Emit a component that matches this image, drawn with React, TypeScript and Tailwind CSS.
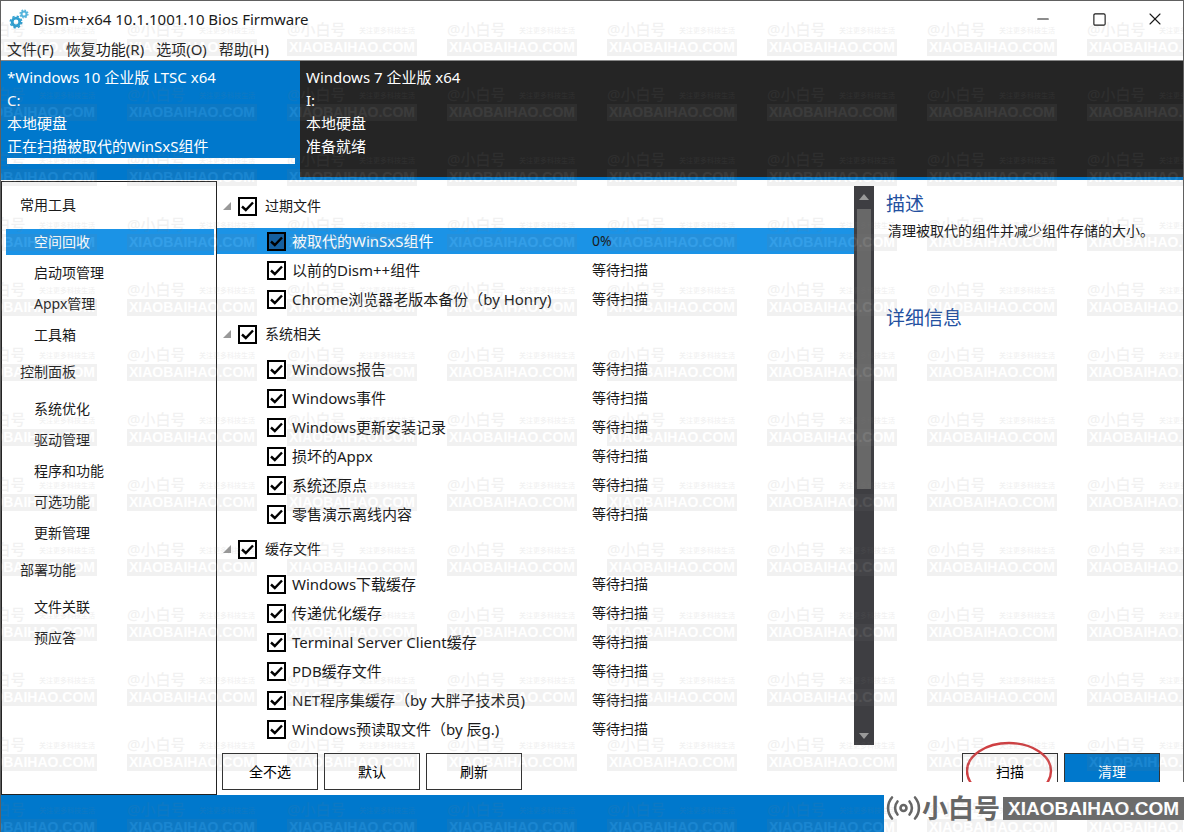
import { Minus, Square, X } from 'lucide-react'

const menus = ['文件(F)', '恢复功能(R)', '选项(O)', '帮助(H)']

const tools = [
  { title: '常用工具', items: ['空间回收', '启动项管理', 'Appx管理', '工具箱'] },
  { title: '控制面板', items: ['系统优化', '驱动管理', '程序和功能', '可选功能', '更新管理'] },
  { title: '部署功能', items: ['文件关联', '预应答'] },
]

const groups = [
  {
    title: '过期文件',
    items: ['被取代的WinSxS组件', '以前的Dism++组件', 'Chrome浏览器老版本备份（by Honry)'],
  },
  {
    title: '系统相关',
    items: ['Windows报告', 'Windows事件', 'Windows更新安装记录', '损坏的Appx', '系统还原点', '零售演示离线内容'],
  },
  {
    title: '缓存文件',
    items: [
      'Windows下载缓存',
      '传递优化缓存',
      'Terminal Server Client缓存',
      'PDB缓存文件',
      'NET程序集缓存（by 大胖子技术员)',
      'Windows预读取文件（by 辰g.)',
    ],
  },
]

const ACTIVE_TOOL = '空间回收'
const ACTIVE_ITEM = '被取代的WinSxS组件'

function Gears() {
  return (
    <svg viewBox="0 0 20 20" className="size-5" fill="none" aria-hidden="true">
      <circle cx="7" cy="13" r="3.8" stroke="#2f9fd0" strokeWidth="2.8" />
      <circle cx="7" cy="13" r="5.7" stroke="#2f9fd0" strokeWidth="1.6" strokeDasharray="2.3 2.18" />
      <circle cx="15" cy="5" r="2.5" stroke="#55b4dc" strokeWidth="2" />
      <circle cx="15" cy="5" r="3.9" stroke="#55b4dc" strokeWidth="1.3" strokeDasharray="1.6 1.46" />
    </svg>
  )
}

function CheckBox({ active = false }: { active?: boolean }) {
  return (
    <span className="grid size-[19px] shrink-0 place-items-center">
      <input
        type="checkbox"
        defaultChecked
        className={`peer col-start-1 row-start-1 size-[19px] appearance-none border-2 border-black ${
          active ? 'bg-[#155f9f]' : 'bg-white'
        }`}
      />
      <svg
        viewBox="0 0 13 13"
        className="pointer-events-none col-start-1 row-start-1 hidden size-[13px] peer-checked:block"
        fill="none"
        stroke="#000"
        strokeWidth="2.4"
        aria-hidden="true"
      >
        <path d="M1 6.5 4.8 10 12 2.5" />
      </svg>
    </span>
  )
}

function ActionButton({ label, primary = false }: { label: string; primary?: boolean }) {
  return (
    <button
      className={`h-[37px] w-24 border border-[#333] ${primary ? 'bg-[#0078cc] text-white' : 'bg-white text-black'}`}
    >
      {label}
    </button>
  )
}

function Watermark() {
  return (
    <div
      aria-hidden="true"
      className="pointer-events-none absolute inset-0 overflow-hidden pt-[17px] opacity-10 select-none"
    >
      {Array.from({ length: 13 }, (_, row) => (
        <div key={row} className="-ml-[34px] flex h-[65px]">
          {Array.from({ length: 8 }, (_, col) => (
            <div key={col} className="w-40 shrink-0 text-[#808080]">
              <div className="flex h-[21px] w-[130px] items-center justify-between pr-0.5 font-medium whitespace-nowrap">
                <span className="text-[15px] leading-5">@小白号</span>
                <span className="pt-1 text-[7px] leading-4">关注更多科技生活</span>
              </div>
              <div className="h-[17px] w-[130px] bg-[#808080] text-center font-['Liberation_Sans',sans-serif] text-[14px] leading-[17px] font-bold text-white">
                XIAOBAIHAO.COM
              </div>
            </div>
          ))}
        </div>
      ))}
    </div>
  )
}

function Brand() {
  return (
    <div className="absolute -right-px bottom-0 flex h-[50px] w-[300px] items-start bg-white pt-[13px] text-[#666]">
      <svg viewBox="0 0 36 26" className="ml-0.5 h-[26px] w-9" fill="none" stroke="currentColor" strokeWidth="2.6" strokeLinecap="round" aria-hidden="true">
        <circle cx="17.5" cy="13" r="3" strokeWidth="2.6" />
        <path d="M11.5 6.5a10 10 0 0 0 0 13M23.5 6.5a10 10 0 0 1 0 13" />
        <path d="M6 2.5a16 16 0 0 0 0 21M29 2.5a16 16 0 0 1 0 21" />
      </svg>
      <span className="flex-1 text-[26px] leading-[26px] font-bold whitespace-nowrap">小白号</span>
      <span className="mt-0.5 h-[23px] w-[181px] bg-[#6b6b6b] text-center font-['Liberation_Sans',sans-serif] text-[19px] leading-[23px] font-bold text-white">
        XIAOBAIHAO.COM
      </span>
    </div>
  )
}

export default function App() {
  return (
    <div className="relative flex min-h-screen flex-col border-x border-t border-[#606060] bg-white font-['Noto_Sans','Noto_Sans_CJK_SC',sans-serif] text-[14px] leading-5 text-[#1a1a1a]">
      {/* Title bar */}
      <header className="flex h-9 items-center">
        <div className="flex flex-1 items-center gap-1 pl-2">
          <Gears />
          <h1 className="text-[15px]">Dism++x64 10.1.1001.10 Bios Firmware</h1>
        </div>
        <button aria-label="最小化" className="flex h-full w-14 items-center justify-center">
          <Minus size={18} strokeWidth={1.6} />
        </button>
        <button aria-label="最大化" className="flex h-full w-14 items-center justify-center">
          <Square size={15} strokeWidth={1.8} strokeLinejoin="miter" />
        </button>
        <button aria-label="关闭" className="flex h-full w-14 items-center justify-center">
          <X size={20} strokeWidth={1.3} />
        </button>
      </header>

      <nav className="flex h-[23px] items-center gap-3 pl-1.5 text-[15px]">
        {menus.map((menu) => (
          <button key={menu}>{menu}</button>
        ))}
      </nav>

      {/* Installed systems */}
      <section className="flex h-[120px] border-t border-b-[3px] border-t-[#888] border-b-[#0078cc] bg-[#252525] text-[15px] leading-[23px] text-white">
        <div className="w-[299px] bg-[#0078cc] pt-[5px] pr-[5px] pl-1.5">
          <p>*Windows 10 企业版 LTSC x64</p>
          <p>C:</p>
          <p>本地硬盘</p>
          <p>正在扫描被取代的WinSxS组件</p>
          <div className="h-1.5 bg-white" />
        </div>
        <div className="flex-1 pt-[5px] pl-1.5">
          <p>Windows 7 企业版 x64</p>
          <p>I:</p>
          <p>本地硬盘</p>
          <p>准备就绪</p>
        </div>
      </section>

      <div className="flex flex-1 pt-px">
        {/* Tool list */}
        <nav className="flex w-[216px] shrink-0 flex-col gap-[11px] border border-[#222] pt-2.5 pr-0.5 pl-1">
          {tools.map((group) => (
            <div key={group.title} className="flex flex-col gap-[11px]">
              <h2 className="pl-3.5 leading-[26px]">{group.title}</h2>
              <ul className="flex flex-col gap-[5px]">
                {group.items.map((item) => (
                  <li key={item}>
                    <a
                      href="#"
                      className={`block pl-7 leading-[26px] ${item === ACTIVE_TOOL ? 'bg-[#1b93e6] text-white' : ''}`}
                    >
                      {item}
                    </a>
                  </li>
                ))}
              </ul>
            </div>
          ))}
        </nav>

        <main className="flex flex-1 flex-col">
          <div className="flex flex-1">
            {/* Cleanup items */}
            <div className="flex flex-1 flex-col gap-[9px] pt-3 pb-[3px]">
              {groups.map((group) => (
                <section key={group.title} className="flex flex-col gap-[9px]">
                  <div className="flex h-[26px] items-center pl-1.5">
                    <svg viewBox="0 0 8 8" className="mr-[7px] size-2" aria-hidden="true">
                      <path d="M8 0v8H0z" fill="#999" />
                    </svg>
                    <label className="flex items-center gap-2">
                      <CheckBox />
                      {group.title}
                    </label>
                  </div>
                  <ul className="flex flex-col gap-[3px]">
                    {group.items.map((item) => {
                      const active = item === ACTIVE_ITEM
                      return (
                        <li
                          key={item}
                          className={`grid h-[26px] grid-cols-[375px_1fr] items-center ${active ? 'bg-[#1b93e6]' : ''}`}
                        >
                          <label
                            className={`flex items-center gap-1.5 pl-[50px] text-[15px] ${active ? 'text-white' : ''}`}
                          >
                            <CheckBox active={active} />
                            {item}
                          </label>
                          <span>{active ? '0%' : '等待扫描'}</span>
                        </li>
                      )
                    })}
                  </ul>
                </section>
              ))}
            </div>

            {/* Scroll bar */}
            <div className="mt-[5px] flex w-5 flex-col items-center bg-[#3e3e42]">
              <svg viewBox="0 0 10 23" className="h-[23px] w-2.5" aria-hidden="true">
                <path d="M0 14 5 8l5 6z" fill="#999" />
              </svg>
              <div className="w-3.5 flex-1">
                <div className="h-[54%] bg-[#686868]" />
              </div>
              <svg viewBox="0 0 10 18" className="h-[18px] w-2.5" aria-hidden="true">
                <path d="M0 6 5 12l5-6z" fill="#999" />
              </svg>
            </div>

            <aside className="w-[309px] pt-2.5 pl-3">
              <h2 className="text-[19px] leading-[26px] text-[#2350a0]">描述</h2>
              <p className="h-[88px] pt-1 pl-0.5">清理被取代的组件并减少组件存储的大小。</p>
              <h2 className="text-[19px] leading-[26px] text-[#2350a0]">详细信息</h2>
            </aside>
          </div>

          <div className="flex gap-1.5 pt-2 pr-[23px] pb-[5px] pl-[5px]">
            <ActionButton label="全不选" />
            <ActionButton label="默认" />
            <ActionButton label="刷新" />
            <div className="relative ml-auto">
              <ActionButton label="扫描" />
              <svg viewBox="0 0 88 60" className="pointer-events-none absolute -top-3 left-1 h-[60px] w-[88px]" fill="none" aria-hidden="true">
                <ellipse cx="43" cy="30" rx="42" ry="28" stroke="#cf3f42" strokeWidth="2.4" />
              </svg>
            </div>
            <ActionButton label="清理" primary />
          </div>
        </main>
      </div>

      <footer className="h-[37px] bg-[#0078cc]" />
      <Brand />
      <Watermark />
    </div>
  )
}
